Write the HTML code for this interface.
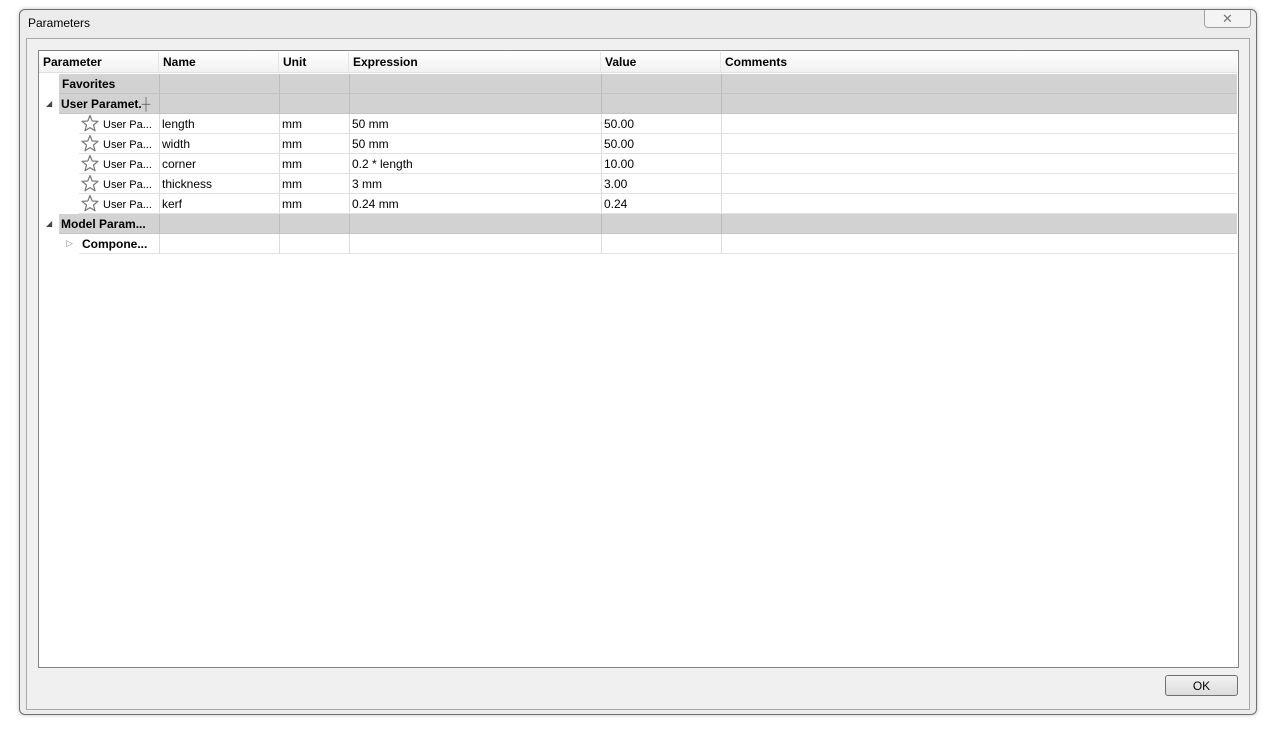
<!DOCTYPE html>
<html><head><style>
body{margin:0;width:1273px;height:734px;background:#fff;position:relative;overflow:hidden;font-family:"Liberation Sans",Arial,sans-serif;font-size:12px;color:#000}
.a{position:absolute}
.win{left:19px;top:9px;width:1236px;height:704px;border:1px solid #6f6f6f;border-radius:6px;background:#ececec;box-shadow:0 0 4px rgba(0,0,0,.25)}
.inner{left:26px;top:38px;width:1222px;height:670px;border:1px solid #a8a8a8;background:#f0f0f0}
.panel{left:38px;top:50px;width:1199px;height:616px;border:1px solid #828282;background:#fff}
.row{position:absolute;height:19px;border-bottom:1px solid #e2e2e2;line-height:21px}
.c{position:absolute;top:0;height:19px;border-right:1px solid #dcdcdc;padding-left:3px;white-space:nowrap;overflow:hidden}
.g{background:#d2d2d2;border-bottom:1px solid #c4c4c4}
.g .c{border-right:1px solid #bdbdbd}
.h{font-weight:bold;font-size:12px}
</style></head><body>
<div class="a win"></div>
<div class="a" style="left:28px;top:16px;font-size:12px">Parameters</div>
<div class="a" style="left:1204px;top:10px;width:45px;height:17px;border:1px solid #a0a0a0;border-top:none;border-radius:0 0 4px 4px;background:#f4f4f4;text-align:center;line-height:17px;color:#777;font-size:13px">✕</div>
<div class="a inner"></div>
<div class="a panel"></div>
<div class="a h" style="left:39px;top:52px;width:1198px;height:20px;background:linear-gradient(#fff,#f1f1f1);line-height:21px;border-bottom:1px solid #e0e0e0">
<span class="a" style="left:4px">Parameter</span>
<span class="a" style="left:124px">Name</span>
<span class="a" style="left:244px">Unit</span>
<span class="a" style="left:314px">Expression</span>
<span class="a" style="left:566px">Value</span>
<span class="a" style="left:686px">Comments</span>
<div class="a" style="left:119px;top:0;width:1px;height:20px;background:#e6e6e6"></div>
<div class="a" style="left:239px;top:0;width:1px;height:20px;background:#e6e6e6"></div>
<div class="a" style="left:309px;top:0;width:1px;height:20px;background:#e6e6e6"></div>
<div class="a" style="left:561px;top:0;width:1px;height:20px;background:#e6e6e6"></div>
<div class="a" style="left:681px;top:0;width:1px;height:20px;background:#e6e6e6"></div>
</div>
<div id="rows"></div>
<div class="row g" style="left:59px;top:74px;width:1178px"><div class="c" style="left:0;width:97px;font-weight:bold">Favorites</div><div class="c" style="left:100px;width:117px"></div><div class="c" style="left:220px;width:67px"></div><div class="c" style="left:290px;width:249px"></div><div class="c" style="left:542px;width:117px"></div></div>
<div class="row g" style="left:59px;top:94px;width:1178px"><div class="c" style="left:0;width:98px;font-weight:bold;padding-left:2px">User Paramet.<span style="font-weight:normal;color:#666">┼</span></div><div class="c" style="left:100px;width:117px"></div><div class="c" style="left:220px;width:67px"></div><div class="c" style="left:290px;width:249px"></div><div class="c" style="left:542px;width:117px"></div></div>
<div class="a" style="left:46px;top:99px;font-size:8px;color:#444">◢</div>
<div class="row g" style="left:59px;top:214px;width:1178px"><div class="c" style="left:0;width:98px;font-weight:bold;padding-left:2px">Model Param...</div><div class="c" style="left:100px;width:117px"></div><div class="c" style="left:220px;width:67px"></div><div class="c" style="left:290px;width:249px"></div><div class="c" style="left:542px;width:117px"></div></div>
<div class="a" style="left:46px;top:219px;font-size:8px;color:#444">◢</div>
<div class="row" style="left:79px;top:234px;width:1158px"><div class="c" style="left:0;width:77px;font-weight:bold">Compone...</div><div class="c" style="left:80px;width:117px"></div><div class="c" style="left:200px;width:67px"></div><div class="c" style="left:270px;width:249px"></div><div class="c" style="left:522px;width:117px"></div></div>
<div class="a" style="left:66px;top:238px;font-size:9px;color:#888">▷</div>
<script>
var d=[["length","50 mm","50.00"],["width","50 mm","50.00"],["corner","0.2 * length","10.00"],["thickness","3 mm","3.00"],["kerf","0.24 mm","0.24"]];
var h="";
d.forEach(function(r,i){var t=114+i*20;
h+='<div class="row" style="left:79px;top:'+t+'px;width:1158px"><div class="c" style="left:0;width:80px;padding-left:0"><svg width="20" height="19" style="position:absolute;left:1px;top:0"><path d="M10 1.5 L12.2 7 L18 7.3 L13.5 11 L15 16.8 L10 13.6 L5 16.8 L6.5 11 L2 7.3 L7.8 7Z" fill="none" stroke="#777" stroke-width="1.2" stroke-linejoin="round"/></svg><span style="position:absolute;left:24px;top:1px;font-size:11px">User Pa...</span></div><div class="c" style="left:80px;width:117px">'+r[0]+'</div><div class="c" style="left:200px;width:67px">mm</div><div class="c" style="left:270px;width:249px">'+r[1]+'</div><div class="c" style="left:522px;width:117px">'+r[2]+'</div></div>';});
document.getElementById("rows").innerHTML=h;
</script>
<div class="a" style="left:1165px;top:675px;width:71px;height:19px;border:1px solid #707070;border-radius:3px;background:linear-gradient(#f2f2f2,#dcdcdc);text-align:center;line-height:20px">OK</div>
</body></html>
